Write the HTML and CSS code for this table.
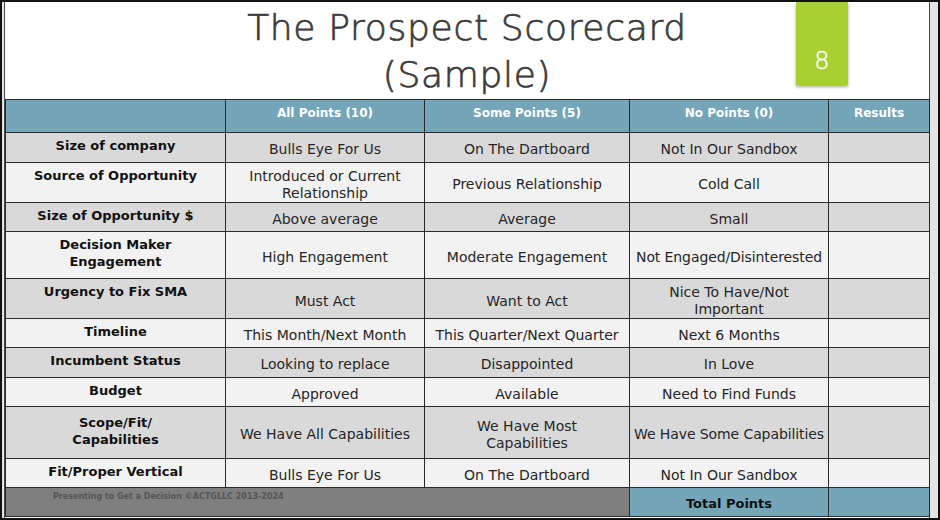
FILE: index.html
```html
<!DOCTYPE html>
<html>
<head>
<meta charset="utf-8">
<link rel="stylesheet" href="styles.css">
</head>
<body>
<div class="frame">
  <div class="slide">
    <div class="title-area">
      <h1 class="title">The Prospect Scorecard<br>(Sample)</h1>
      <div class="badge">8</div>
    </div>
    <table class="score">
      <colgroup>
        <col class="c1"><col class="c2"><col class="c3"><col class="c4"><col class="c5">
      </colgroup>
      <thead>
        <tr class="hdr">
          <th></th><th>All Points (10)</th><th>Some Points (5)</th><th>No Points (0)</th><th>Results</th>
        </tr>
      </thead>
      <tbody>
        <tr class="dk h30"><th>Size of company</th><td>Bulls Eye For Us</td><td>On The Dartboard</td><td>Not In Our Sandbox</td><td></td></tr>
        <tr class="lt h40"><th>Source of Opportunity</th><td>Introduced or Current<br>Relationship</td><td>Previous Relationship</td><td>Cold Call</td><td></td></tr>
        <tr class="dk h29"><th>Size of Opportunity $</th><td>Above average</td><td>Average</td><td>Small</td><td></td></tr>
        <tr class="lt h47"><th>Decision Maker<br>Engagement</th><td>High Engagement</td><td>Moderate Engagement</td><td class="tight">Not Engaged/Disinterested</td><td></td></tr>
        <tr class="dk h40"><th>Urgency to Fix SMA</th><td class="low">Must Act</td><td class="low">Want to Act</td><td>Nice To Have/Not<br>Important</td><td></td></tr>
        <tr class="lt h29"><th>Timeline</th><td>This Month/Next Month</td><td>This Quarter/Next Quarter</td><td>Next 6 Months</td><td></td></tr>
        <tr class="dk h30"><th>Incumbent Status</th><td>Looking to replace</td><td>Disappointed</td><td>In Love</td><td></td></tr>
        <tr class="lt h29"><th>Budget</th><td>Approved</td><td>Available</td><td>Need to Find Funds</td><td></td></tr>
        <tr class="dk h52"><th class="mid">Scope/Fit/<br>Capabilities</th><td>We Have All Capabilities</td><td>We Have Most<br>Capabilities</td><td class="tight">We Have Some Capabilities</td><td></td></tr>
        <tr class="lt h29"><th>Fit/Proper Vertical</th><td class="low">Bulls Eye For Us</td><td class="low">On The Dartboard</td><td class="low">Not In Our Sandbox</td><td></td></tr>
        <tr class="foot h29"><td colspan="3" class="copy">Presenting to Get a Decision ©ACTGLLC 2013-2024</td><td class="total">Total Points</td><td class="total"></td></tr>
      </tbody>
    </table>
  </div>
</div>
</body>
</html>
```

FILE: styles.css
```css
html, body {
  margin: 0;
  padding: 0;
  background: #ffffff;
}

.frame {
  width: 926px;
  height: 516px;
  border: 2px solid #111111;
  background: #e4e4e4;
  padding: 0 8px 0 2px;
  box-sizing: content-box;
}

.slide {
  width: 924px;
  height: 516px;
  background: #ffffff;
  border-left: 1px solid #4a4a4a;
  border-right: 1px solid #4a4a4a;
  font-family: "DejaVu Sans", "Liberation Sans", sans-serif;
}

.title-area {
  position: relative;
  height: 97px;
}

.title {
  margin: 0;
  padding-top: 2px;
  text-align: center;
  font-family: "DejaVu Sans", sans-serif;
  font-weight: 200;
  font-size: 36px;
  line-height: 47px;
  color: #3b3b3b;
  letter-spacing: 0.7px;
  -webkit-text-stroke: 0.7px #3b3b3b;
}

.badge {
  position: absolute;
  left: 791px;
  top: 0;
  width: 52px;
  height: 83px;
  background: #a8d02f;
  box-shadow: 0 2px 3px rgba(0, 0, 0, 0.35);
  color: #ffffff;
  font-size: 24px;
  font-family: "DejaVu Sans", sans-serif;
  font-weight: 200;
  -webkit-text-stroke: 0.4px #ffffff;
  text-align: center;
  box-sizing: border-box;
  padding-top: 45px;
  line-height: 28px;
}

.score {
  border-collapse: collapse;
  table-layout: fixed;
  width: 924px;
}

.c1 { width: 220px; }
.c2 { width: 199px; }
.c3 { width: 205px; }
.c4 { width: 199px; }
.c5 { width: 101px; }

.score th,
.score td {
  border: 1px solid #2a2a2a;
  padding: 0 4px;
  text-align: center;
  line-height: 17px;
}

.score td {
  font-size: 14px;
  color: #262626;
  vertical-align: middle;
  padding-top: 4px;
}

.score tbody th {
  font-size: 13px;
  font-weight: bold;
  color: #111111;
  vertical-align: top;
  padding-top: 4px;
}

.score tbody th.mid {
  padding-top: 7px;
}

.hdr th {
  height: 33px;
  background: #74a5b8;
  color: #ffffff;
  font-size: 12px;
  font-weight: bold;
  vertical-align: top;
  padding-top: 5px;
  box-sizing: border-box;
}

.dk { background: #d9d9d9; }
.lt { background: #f2f2f2; }

.h29 > * { height: 29px; box-sizing: border-box; }
.h30 > * { height: 30px; box-sizing: border-box; }
.h40 > * { height: 40px; box-sizing: border-box; }
.h47 > * { height: 47px; box-sizing: border-box; }
.h52 > * { height: 52px; box-sizing: border-box; }

.score td.low {
  padding-top: 5px;
}

.score td.tight {
  padding: 4px 1px 0;
  letter-spacing: -0.1px;
}

.foot .copy {
  background: #7f7f7f;
  text-align: left;
  vertical-align: top;
  padding: 3px 0 0 47px;
  font-size: 8px;
  font-weight: bold;
  color: #555555;
  line-height: 12px;
}

.foot .total {
  background: #74a5b8;
  font-weight: bold;
  color: #111111;
  font-size: 13px;
  vertical-align: middle;
  padding-top: 2px;
}
```
